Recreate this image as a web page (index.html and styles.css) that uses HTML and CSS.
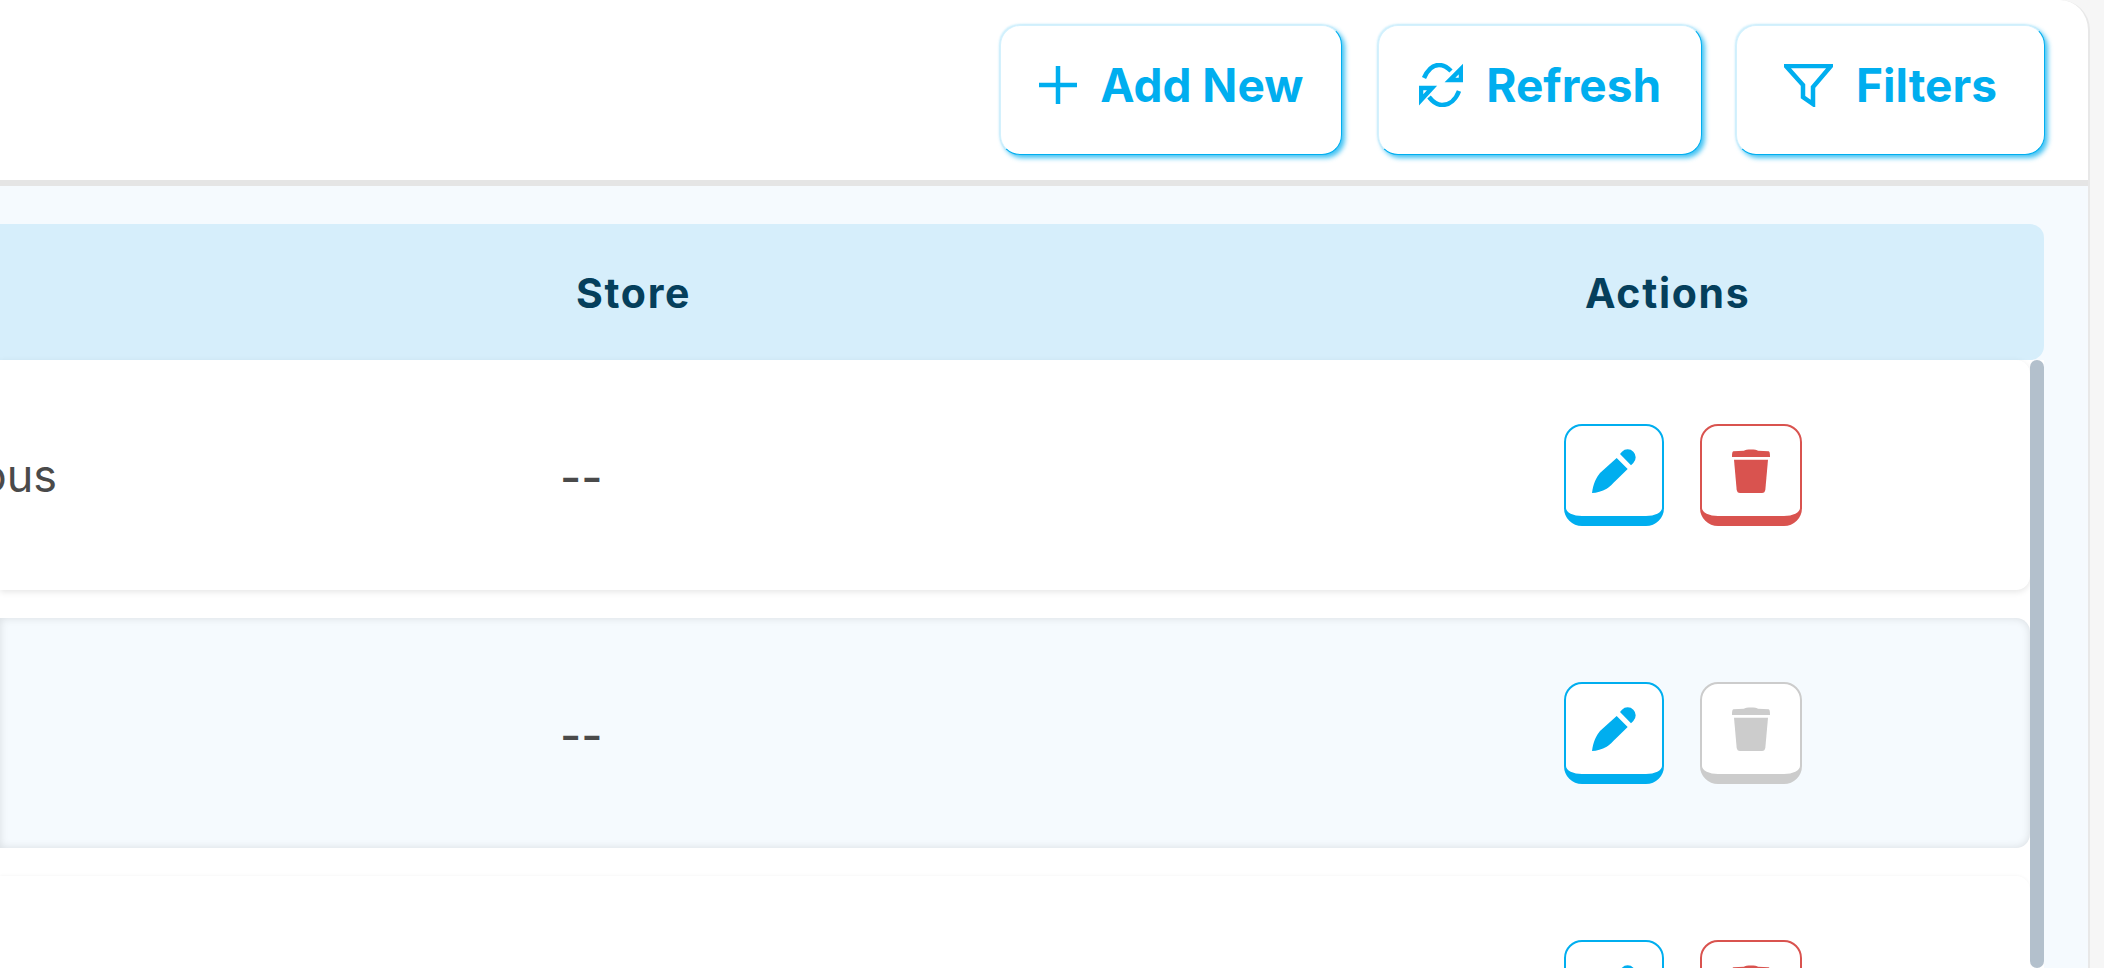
FILE: index.html
```html
<!DOCTYPE html>
<html lang="en">
<head>
    <meta charset="UTF-8">
    <meta name="viewport" content="width=device-width, initial-scale=1.0">
    <title>Categories</title>
    <link rel="stylesheet" href="styles.css">
</head>
<body>
    <div class="panel">
        <!-- Toolbar -->
        <div class="toolbar">
            <button class="tool-btn tool-btn-add">
                <svg class="tool-icon icon-plus" viewBox="0 0 38 38"><path d="M19 0V38M0 19H38"/></svg>
                <span>Add New</span>
            </button>
            <button class="tool-btn tool-btn-refresh">
                <svg class="tool-icon icon-refresh" viewBox="0 0 44 44"><path d="M5 15C9 6 14 2 20 2C25 2 29 5 32 8"/><path d="M42 6V17H31Z"/><path d="M10 34C14 39 18 42 23 42C31 42 37 36 40 28"/><path d="M2 25H13L2 37Z"/></svg>
                <span>Refresh</span>
            </button>
            <button class="tool-btn tool-btn-filters">
                <svg class="tool-icon icon-filter" viewBox="0 0 49 43"><path d="M2 2H47L29 23V40L19 33V21Z"/></svg>
                <span>Filters</span>
            </button>
        </div>

        <div class="content">
            <div class="table-head">
                <div></div>
                <div>Store</div>
                <div>Actions</div>
            </div>
            <div class="table-body">
                <div class="rows">
                    <div class="row">
                        <div class="cell-name">Miscellaneous</div>
                        <div></div>
                        <div class="cell-store">--</div>
                        <div class="actions">
                            <button class="act-btn act-edit">
                                <svg class="icon-pen" viewBox="0 0 132 132"><path d="M74 27L107 60L74 92C62 104 52 114 44 119C30 127 14 131 0 132C2 118 5 107 9 97C14 86 19 78 24 72Z"/><path d="M84 15L90 8A24 24 0 0 1 124 42L117 49Z"/></svg>
                            </button>
                            <button class="act-btn act-delete">
                                <svg class="icon-trash" viewBox="0 0 114 132"><path d="M36 5C40 0 74 0 78 5L110 7C113 8 114 12 114 24H0C0 12 1 8 4 7Z"/><path d="M6 32H108L100 122C99 128 96 132 90 132H24C18 132 15 128 14 122Z"/></svg>
                            </button>
                        </div>
                    </div>
                    <div class="row row-alt">
                        <div></div>
                        <div></div>
                        <div class="cell-store">--</div>
                        <div class="actions">
                            <button class="act-btn act-edit">
                                <svg class="icon-pen" viewBox="0 0 132 132"><path d="M74 27L107 60L74 92C62 104 52 114 44 119C30 127 14 131 0 132C2 118 5 107 9 97C14 86 19 78 24 72Z"/><path d="M84 15L90 8A24 24 0 0 1 124 42L117 49Z"/></svg>
                            </button>
                            <button class="act-btn act-disabled">
                                <svg class="icon-trash" viewBox="0 0 114 132"><path d="M36 5C40 0 74 0 78 5L110 7C113 8 114 12 114 24H0C0 12 1 8 4 7Z"/><path d="M6 32H108L100 122C99 128 96 132 90 132H24C18 132 15 128 14 122Z"/></svg>
                            </button>
                        </div>
                    </div>
                    <div class="row row-last">
                        <div></div>
                        <div></div>
                        <div class="cell-store"></div>
                        <div class="actions">
                            <button class="act-btn act-edit">
                                <svg class="icon-pen" viewBox="0 0 132 132"><path d="M74 27L107 60L74 92C62 104 52 114 44 119C30 127 14 131 0 132C2 118 5 107 9 97C14 86 19 78 24 72Z"/><path d="M84 15L90 8A24 24 0 0 1 124 42L117 49Z"/></svg>
                            </button>
                            <button class="act-btn act-delete">
                                <svg class="icon-trash" viewBox="0 0 114 132"><path d="M36 5C40 0 74 0 78 5L110 7C113 8 114 12 114 24H0C0 12 1 8 4 7Z"/><path d="M6 32H108L100 122C99 128 96 132 90 132H24C18 132 15 128 14 122Z"/></svg>
                            </button>
                        </div>
                    </div>
                </div>
                <div class="scroll-thumb"></div>
            </div>
        </div>
    </div>
</body>
</html>
```

FILE: styles.css
```css
html, body {
    height: 100%;
}
body {
    font-family: Inter, "Liberation Sans", sans-serif;
    margin: 0;
    padding: 0;
    background-color: #f6f6f6;
    overflow: hidden;
}
button {
    font-family: inherit;
    cursor: pointer;
}

.panel {
    display: flex;
    flex-direction: column;
    width: 2090px;
    height: 100%;
    background: white;
    border-right: 2px solid #e8e8e8;
    border-top-right-radius: 30px;
    box-sizing: border-box;
    overflow: hidden;
}

.toolbar {
    display: flex;
    justify-content: flex-end;
    align-items: flex-start;
    gap: 34px;
    flex: none;
    height: 186px;
    box-sizing: border-box;
    padding: 25px 43px 0 0;
    border-bottom: 6px solid #e5e5e5;
}
.tool-btn {
    display: flex;
    align-items: center;
    gap: 23px;
    height: 130px;
    color: #00aeef;
    background: white;
    font-size: 46px;
    font-weight: 700;
    border: 1px solid #d4f1fd;
    border-right-color: #00aeef;
    border-bottom-color: #00aeef;
    border-radius: 20px;
    box-shadow: 3px 3px 5px rgba(0, 174, 239, 0.75), -1px -1px 2px rgba(0, 174, 239, 0.18);
}
.tool-btn-add {
    margin-right: 2px;
    padding: 0 38px 10px 38px;
}
.tool-btn-refresh {
    padding: 0 40px 10px 40px;
}
.tool-btn-filters {
    padding: 0 47px 10px 47px;
}
.tool-icon {
    flex: none;
    fill: none;
    stroke: #00aeef;
    stroke-width: 4.5;
}
.icon-plus {
    width: 38px;
    height: 38px;
}
.icon-refresh {
    width: 44px;
    height: 44px;
}
.icon-filter {
    width: 49px;
    height: 43px;
}

.content {
    display: flex;
    flex-direction: column;
    flex: 1;
    min-height: 0;
    padding: 38px 44px 0 0;
    background-color: #f5fafe;
}
.table-head {
    display: grid;
    grid-template-columns: 576px 1009px 1fr;
    align-items: center;
    flex: none;
    height: 136px;
    box-sizing: border-box;
    padding-top: 2px;
    background-color: #d6eefb;
    border-top-right-radius: 14px;
    border-bottom-right-radius: 14px;
    color: #053f5c;
    font-size: 41px;
    font-weight: 700;
    letter-spacing: 1.7px;
}

.table-body {
    display: flex;
    flex: 1;
    min-height: 0;
    background: white;
}
.rows {
    flex: 1;
    display: flex;
    flex-direction: column;
    gap: 28px;
    min-width: 0;
}
.row {
    display: grid;
    grid-template-columns: 57px 503px 1004px 1fr;
    align-items: center;
    flex: none;
    height: 230px;
    color: #4a4a4a;
    font-size: 45px;
    background: white;
    border-top-right-radius: 14px;
    border-bottom-right-radius: 14px;
    box-shadow: 0 2px 6px rgba(0, 0, 0, 0.1);
}
.row-alt {
    background-color: #f5fafe;
    box-shadow: inset 0 0 8px rgba(0, 0, 0, 0.12);
}
.row-last {
    box-shadow: 0 -1px 3px rgba(0, 0, 0, 0.03);
}
.cell-name {
    display: flex;
    justify-content: flex-end;
    white-space: nowrap;
}
.cell-store {
    padding-top: 3px;
    font-size: 46px;
    font-weight: 500;
}
.actions {
    display: flex;
    gap: 36px;
}
.act-btn {
    display: flex;
    align-items: center;
    justify-content: center;
    width: 100px;
    height: 102px;
    padding: 0;
    background: white;
    border: 2px solid;
    border-bottom-width: 10px;
    border-radius: 18px;
}
.act-edit {
    border-color: #00aeef;
    fill: #00aeef;
}
.act-delete {
    width: 102px;
    border-color: #d9534f;
    fill: #d9534f;
}
.act-disabled {
    width: 102px;
    border-color: #cccccc;
    fill: #cccccc;
}
.icon-pen {
    width: 44px;
    height: 44px;
}
.icon-trash {
    width: 38px;
    height: 44px;
}
.scroll-thumb {
    flex: none;
    width: 14px;
    background-color: #b3c0cc;
    border-radius: 7px;
}
```
